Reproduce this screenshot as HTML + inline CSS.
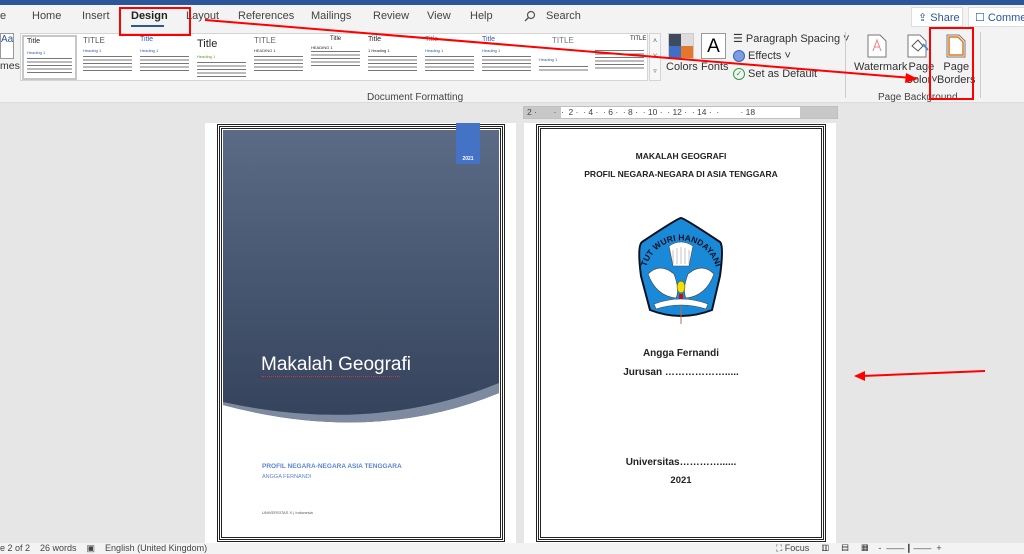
<!DOCTYPE html>
<html><head><meta charset="utf-8">
<style>
*{margin:0;padding:0;box-sizing:border-box}
body{width:1024px;height:554px;overflow:hidden;background:#e6e6e6;font-family:"Liberation Sans",sans-serif;position:relative}
.a{position:absolute}
.tab{position:absolute;top:10px;font-size:11px;color:#444}
.th{position:absolute;top:35px;width:55px;height:45px;background:#fff;overflow:hidden}
.th .t{position:absolute;left:3px;top:1px;font-size:7px;color:#222}
.th .h{position:absolute;left:3px;top:13px;font-size:4px;color:#2f5fa7}
.th .l{position:absolute;left:3px;right:3px;top:20px;height:18px;background:repeating-linear-gradient(#fff 0 1px,#777 1px 2px,#fff 2px 3.5px)}
.rb{font-size:11px;color:#333;position:absolute}
.c2{position:absolute;left:0;right:0;text-align:center;font-weight:bold;color:#222}
</style></head><body>
<div class="a" style="left:0;top:0;width:1024px;height:5px;background:#2b579a"></div>
<div class="a" style="left:0;top:5px;width:1024px;height:98px;background:#f3f3f3;border-bottom:1px solid #dcdcdc"></div>
<div class="tab" style="left:0">e</div>
<div class="tab" style="left:32px">Home</div>
<div class="tab" style="left:82px">Insert</div>
<div class="tab" style="left:131px;font-weight:bold;color:#222">Design</div>
<div class="a" style="left:131px;top:25px;width:33px;height:2px;background:#2b579a"></div>
<div class="tab" style="left:186px">Layout</div>
<div class="tab" style="left:238px">References</div>
<div class="tab" style="left:311px">Mailings</div>
<div class="tab" style="left:373px">Review</div>
<div class="tab" style="left:427px">View</div>
<div class="tab" style="left:470px">Help</div>
<svg class="a" style="left:524px;top:10px" width="12" height="12"><circle cx="7" cy="5" r="3.5" fill="none" stroke="#555" stroke-width="1.2"/><path d="M4.5 7.5L1 11" stroke="#555" stroke-width="1.3"/></svg>
<div class="tab" style="left:546px">Search</div>
<div class="a" style="left:911px;top:7px;width:52px;height:20px;background:#fff;border:1px solid #ddd;font-size:11px;color:#2b579a;padding:3px 0 0 6px">⇪ Share</div>
<div class="a" style="left:968px;top:7px;width:60px;height:20px;background:#fff;border:1px solid #ddd;font-size:11px;color:#2b579a;padding:3px 0 0 6px">☐ Comme</div>
<div class="a" style="left:0;top:33px;width:14px;height:26px;background:#fff;border:1px solid #999;font-size:10px;color:#2b579a">Aa</div>
<div class="a" style="left:0;top:60px;font-size:10.5px;color:#333">mes</div>
<div class="a" style="left:20px;top:33px;width:628px;height:48px;background:#fff;border:1px solid #d4d4d4"></div>
<div class="th" style="left:22px;border:2px solid #c6c6c6"><div class="t">Title</div><div class="h">Heading 1</div><div class="l"></div></div>
<div class="th" style="left:80px"><div class="t" style="color:#555;font-size:8px">TITLE</div><div class="h">Heading 1</div><div class="l"></div></div>
<div class="th" style="left:137px"><div class="t" style="color:#2f5fa7">Title</div><div class="h">Heading 1</div><div class="l"></div></div>
<div class="th" style="left:194px"><div class="t" style="font-size:11px;top:3px">Title</div><div class="h" style="top:19px;color:#5a9a3a">Heading 1</div><div class="l" style="top:26px"></div></div>
<div class="th" style="left:251px"><div class="t" style="color:#666;font-size:8px">TITLE</div><div class="h" style="color:#333">HEADING 1</div><div class="l"></div></div>
<div class="th" style="left:308px"><div class="t" style="left:22px;font-size:6px">Title</div><div class="h" style="top:10px;color:#222">HEADING 1</div><div class="l" style="top:15px"></div></div>
<div class="th" style="left:365px"><div class="t">Title</div><div class="h" style="color:#222">1 Heading 1</div><div class="l"></div></div>
<div class="th" style="left:422px"><div class="t" style="color:#777">Title</div><div class="h">Heading 1</div><div class="l"></div></div>
<div class="th" style="left:479px"><div class="t" style="color:#2f5fa7">Title</div><div class="h">Heading 1</div><div class="l"></div></div>
<div class="th" style="left:536px"><div class="t" style="left:16px;color:#777;font-size:8px">TITLE</div><div class="h" style="top:22px">Heading 1</div><div class="l" style="top:30px;height:8px"></div></div>
<div class="th" style="left:592px"><div class="t" style="left:38px;font-size:6px">TITLE</div><div class="l" style="top:14px;height:22px"></div></div>
<div class="a" style="left:649px;top:33px;width:12px;height:48px;border:1px solid #d4d4d4;background:#f7f7f7;font-size:7px;color:#555;text-align:center;line-height:15px">˄<br>˅<br>▿</div>
<div class="a" style="left:367px;top:92px;font-size:10px;color:#444">Document Formatting</div>
<div class="a" style="left:668px;top:33px;width:26px;height:26px;border:1px solid #ccc;background:linear-gradient(90deg,#3e4a5e 50%,#ddd 50%) top/100% 50% no-repeat,linear-gradient(90deg,#3f6fc6 50%,#e3782c 50%) bottom/100% 50% no-repeat"></div>
<div class="rb" style="left:666px;top:61px">Colors</div>
<div class="a" style="left:701px;top:33px;width:25px;height:26px;background:#fff;border:1px solid #999;font-size:19px;text-align:center;line-height:25px">A</div>
<div class="rb" style="left:701px;top:61px">Fonts</div>
<div class="rb" style="left:733px;top:32px">☰ Paragraph Spacing ˅</div>
<div class="a" style="left:733px;top:50px;width:12px;height:12px;border-radius:50%;background:#7d9be0;border:1px solid #3a64b8"></div>
<div class="rb" style="left:748px;top:50px">Effects ˅</div>
<div class="a" style="left:733px;top:68px;width:12px;height:12px;border-radius:50%;border:1px solid #2e9b46;color:#2e9b46;font-size:8px;text-align:center;line-height:10px">✓</div>
<div class="rb" style="left:748px;top:68px">Set as Default</div>
<div class="a" style="left:845px;top:32px;width:1px;height:66px;background:#ccc"></div>
<svg class="a" style="left:867px;top:34px" width="20" height="24"><path d="M1 1H13L19 7V23H1Z" fill="#fff" stroke="#777"/><path d="M6 17L10 6L14 17M7.5 13H12.5" fill="none" stroke="#f08080"/></svg>
<div class="rb" style="left:854px;top:61px">Watermark</div>
<svg class="a" style="left:907px;top:34px" width="22" height="24"><path d="M1 1H13L19 7V23H1Z" fill="#fff" stroke="#777"/><path d="M5 12L11 6L16 12L11 17Z" fill="#fff" stroke="#555"/><path d="M16 10L21 16" stroke="#4a8fe0" stroke-width="2"/></svg>
<div class="rb" style="left:905px;top:61px;text-align:center;line-height:13px">Page<br>Color˅</div>
<svg class="a" style="left:946px;top:34px" width="20" height="24"><path d="M1 1H13L19 7V23H1Z" fill="#fff" stroke="#777"/><path d="M3 3H12L17 8V21H3Z" fill="none" stroke="#e07a1f" stroke-width="1.5"/></svg>
<div class="rb" style="left:937px;top:61px;text-align:center;line-height:13px">Page<br>Borders</div>
<div class="a" style="left:878px;top:92px;font-size:10px;color:#444">Page Background</div>
<div class="a" style="left:980px;top:32px;width:1px;height:66px;background:#ccc"></div>
<!-- ruler -->
<div class="a" style="left:523px;top:106px;width:315px;height:13px;background:#c8c8c8;border:1px solid #c0c0c0"></div>
<div class="a" style="left:561px;top:107px;width:239px;height:11px;background:#fff"></div>
<div class="a" style="left:527px;top:107px;font-size:8.5px;color:#444;white-space:pre;line-height:11px">2 ·       ·  ·  2 ·  · 4 ·  · 6 ·  · 8 ·  · 10 ·  · 12 ·  · 14 ·  ·         · 18</div>
<!-- page 1 -->
<div class="a" style="left:205px;top:123px;width:311px;height:425px;background:#fff"></div>
<div class="a" style="left:217px;top:124px;width:288px;height:418px;border:3px double #222"></div>
<div class="a" style="left:221px;top:128px;width:280px;height:410px;border:1px solid #222"></div>
<svg class="a" style="left:223px;top:130px" width="276" height="300"><defs><linearGradient id="g" x1="0" y1="0" x2="0" y2="1"><stop offset="0" stop-color="#5c6b85"/><stop offset="1" stop-color="#34425c"/></linearGradient></defs><path d="M0 0H276V263Q150 315 0 275Z" fill="url(#g)"/><path d="M276 253V263Q150 315 0 275V272Q150 305 276 253Z" fill="#7e8aa0"/></svg>
<div class="a" style="left:456px;top:123px;width:24px;height:41px;background:#4472c4;color:#fff;font-size:5px;font-weight:bold;text-align:center;padding-top:33px">2021</div>
<div class="a" style="left:261px;top:354px;font-size:19px;color:#fff">Makalah Geografi</div>
<div class="a" style="left:262px;top:376px;width:138px;border-bottom:1px dotted #e03030"></div>
<div class="a" style="left:262px;top:463px;font-size:6.5px;font-weight:bold;color:#5b85cf">PROFIL NEGARA-NEGARA ASIA TENGGARA</div>
<div class="a" style="left:262px;top:474px;font-size:5.5px;color:#5b85cf">ANGGA FERNANDI</div>
<div class="a" style="left:262px;top:510px;font-size:4px;color:#555">UNIVERSITAS X | Indonesia</div>
<!-- page 2 -->
<div class="a" style="left:524px;top:123px;width:312px;height:425px;background:#fff"></div>
<div class="a" style="left:536px;top:124px;width:290px;height:418px;border:3px double #222"></div>
<div class="a" style="left:540px;top:128px;width:282px;height:410px;border:1px solid #222"></div>
<div class="c2" style="left:536px;width:290px;top:151px;font-size:8.5px">MAKALAH GEOGRAFI</div>
<div class="c2" style="left:536px;width:290px;top:169px;font-size:8.5px">PROFIL NEGARA-NEGARA DI ASIA TENGGARA</div>
<svg class="a" style="left:636px;top:216px" width="90" height="110" viewBox="0 0 90 110">
<path d="M45 2Q48 2 84 26Q88 30 84 60L76 94Q45 106 14 94L5 60Q1 30 6 26Q42 2 45 2Z" fill="#1a8ad8" stroke="#112" stroke-width="2"/>
<path id="arc" d="M10 52A36 36 0 0 1 80 52" fill="none"/>
<text font-size="8.5" font-weight="bold" fill="#112" font-family="Liberation Sans"><textPath href="#arc" startOffset="50%" text-anchor="middle">TUT WURI HANDAYANI</textPath></text>
<path d="M33 30Q45 22 57 30L53 50H37Z" fill="#fff" stroke="#444" stroke-width="0.6"/>
<path d="M37 34V48M41 32V48M45 31V48M49 32V48M53 34V48" stroke="#888" stroke-width="0.5"/>
<path d="M12 58Q24 46 38 58Q44 74 40 82Q20 80 12 58Z M78 58Q66 46 52 58Q46 74 50 82Q70 80 78 58Z" fill="#fff" stroke="#444" stroke-width="0.6"/>
<ellipse cx="45" cy="71" rx="4" ry="6" fill="#f2e000" stroke="#333" stroke-width="0.5"/>
<rect x="43" y="78" width="4" height="6" fill="#c01010"/>
<path d="M18 88Q45 78 72 88L70 93Q45 85 20 93Z" fill="#fff" stroke="#444" stroke-width="0.6"/>
<path d="M45 90V108" stroke="#b07050"/></svg>
<div class="c2" style="left:536px;width:290px;top:348px;font-size:10px">Angga Fernandi</div>
<div class="c2" style="left:536px;width:290px;top:367px;font-size:10px">Jurusan ……………….....</div>
<div class="c2" style="left:536px;width:290px;top:457px;font-size:10px">Universitas…………......</div>
<div class="c2" style="left:536px;width:290px;top:475px;font-size:9.5px">2021</div>
<!-- status bar -->
<div class="a" style="left:0;top:543px;width:1024px;height:11px;background:#f3f3f3;font-size:9px;color:#444;white-space:pre;line-height:11px">e 2 of 2    26 words    ▣    English (United Kingdom)</div>
<div class="a" style="left:776px;top:543px;font-size:9px;color:#444;line-height:11px;white-space:pre">⛶ Focus     ▥     ▤     ▦    -  ——┃——  +</div>
<!-- annotations -->
<div class="a" style="left:119px;top:7px;width:72px;height:29px;border:2px solid #f00"></div>
<div class="a" style="left:929px;top:27px;width:45px;height:73px;border:2px solid #f00"></div>
<svg class="a" style="left:0;top:0" width="1024" height="554"><path d="M205 20L912 78" stroke="#f00" stroke-width="2"/><path d="M918 79L906 73L905 83Z" fill="#f00"/><path d="M985 371L862 376" stroke="#f00" stroke-width="2"/><path d="M854 376L865 371L865 381Z" fill="#f00"/></svg>
</body></html>
